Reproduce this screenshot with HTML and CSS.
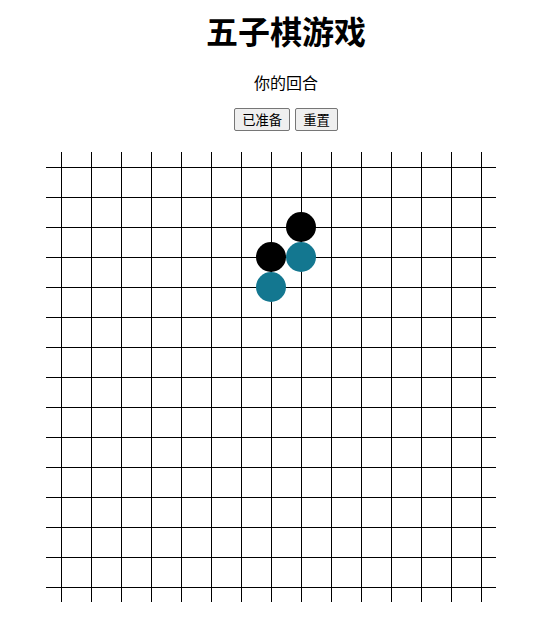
FILE: index.html
```html
<!DOCTYPE html>
<html lang="zh">
<head>
<meta charset="utf-8">
<title>五子棋游戏</title>
<link rel="stylesheet" href="styles.css">
</head>
<body>
  <header class="head">
    <h1 class="title">五子棋游戏</h1>
    <p class="status">你的回合</p>
    <div class="actions">
      <button class="btn">已准备</button>
      <button class="btn">重置</button>
    </div>
  </header>
  <div class="board">
    <span class="stone black" style="grid-area: 3 / 9"></span>
    <span class="stone black" style="grid-area: 4 / 8"></span>
    <span class="stone blue" style="grid-area: 4 / 9"></span>
    <span class="stone blue" style="grid-area: 5 / 8"></span>
  </div>
</body>
</html>
```
FILE: styles.css
```css
html, body {
  margin: 0;
  padding: 0;
  background: #fff;
}
body {
  font-family: "Noto Sans CJK SC", "Noto Sans", sans-serif;
  color: #000;
}
.head {
  padding-left: 14px;
  text-align: center;
}
.title {
  margin: 0;
  padding-top: 10px;
  font-size: 32px;
  line-height: 40px;
  font-weight: 700;
}
.status {
  margin: 20px 0 0;
  font-size: 16px;
  line-height: 24px;
}
.actions {
  margin-top: 14px;
  display: flex;
  justify-content: center;
  gap: 5px;
}
.btn {
  font-family: "Noto Sans CJK SC", sans-serif;
  font-size: 13.33px;
  line-height: 19px;
  padding: 1px 7px;
  border: 1px solid #767676;
  border-radius: 2px;
  background: #efefef;
  color: #000;
}
.board {
  margin: 21px 0 0 46px;
  width: 450px;
  height: 450px;
  display: grid;
  grid-template-columns: repeat(15, 30px);
  grid-template-rows: repeat(15, 30px);
  background-image:
    linear-gradient(to right, transparent 15px, #000 15px, #000 16px, transparent 16px),
    linear-gradient(to bottom, transparent 15px, #000 15px, #000 16px, transparent 16px);
  background-size: 30px 30px;
}
.stone {
  width: 30px;
  height: 30px;
  border-radius: 50%;
}
.black { background: #000; }
.blue { background: #137790; }
```
